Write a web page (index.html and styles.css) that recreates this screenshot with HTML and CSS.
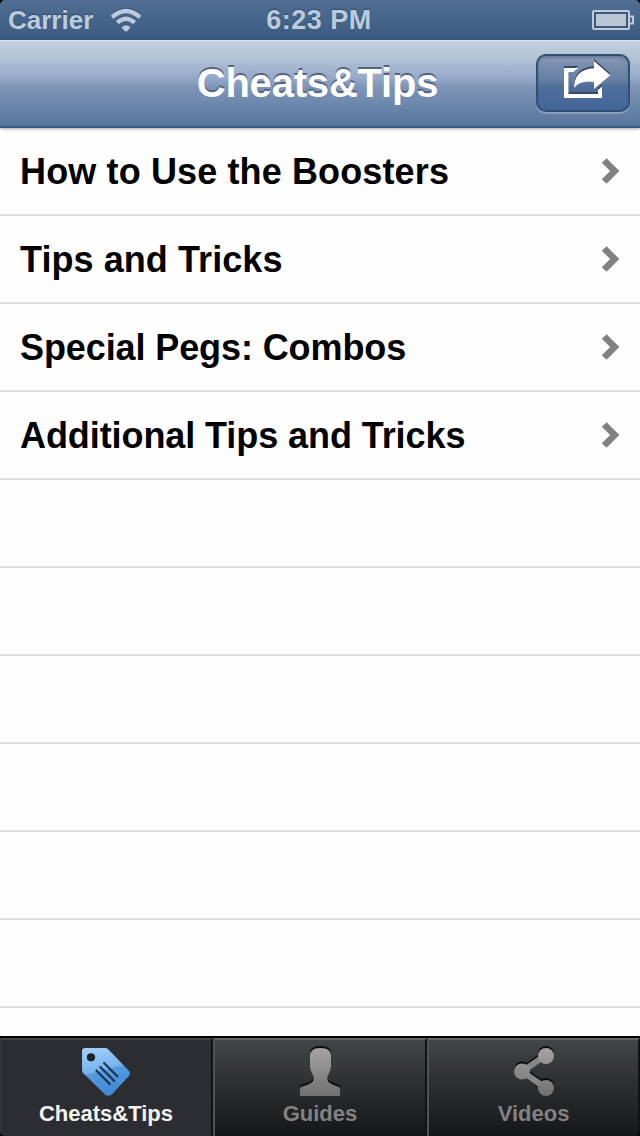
FILE: index.html
```html
<!DOCTYPE html>
<html lang="en">
<head>
<meta charset="utf-8">
<title>Cheats&amp;Tips</title>
<link rel="stylesheet" href="styles.css">
</head>
<body>
<div class="screen">
  <header class="status">
    <div class="status-left">
      <span class="carrier">Carrier</span>
      <svg class="wifi" width="32" height="24" viewBox="110 7 32 24">
        <g fill="none" stroke="#bdcbdc" stroke-width="4.2">
          <path d="M112 16.2Q126 3.8 140 16.2"/>
          <path d="M117.3 21.6Q126 13.800 134.700 21.600"/>
        </g>
        <path d="M121.500 26.300Q126 22 130.500 26.300L127.500 29.800Q126 31.300 124.500 29.800Z" fill="#bdcbdc"/>
      </svg>
    </div>
    <span class="clock">6:23 PM</span>
    <svg class="battery" width="44" height="22" viewBox="591 8 44 22">
      <rect x="593" y="10" width="36" height="18" rx="1" fill="#3d5878" stroke="#bdcbdc" stroke-width="2"/>
      <rect x="596" y="13" width="30" height="12" fill="#bac6d6"/>
      <path d="M630 15.500h3v7h-3" fill="none" stroke="#bdcbdc" stroke-width="2"/>
    </svg>
  </header>
  <nav class="navbar">
    <h1 class="title">Cheats&amp;Tips</h1>
    <button class="share" aria-label="Share">
      <svg width="54" height="46" viewBox="556 60 54 46">
        <g class="engraved" fill="#fff">
          <path d="M564 68H578.500Q575 70 573.500 72H568.500V94H598V90L602 86.500V98H564Z"/>
          <path d="M594 61L610.300 75.300L594 89V82Q580 80 574.200 88Q574 69.500 594 68.300Z"/>
        </g>
      </svg>
    </button>
  </nav>
  <main class="list">
    <div class="row"><span class="label l1">How to Use the Boosters</span><svg class="chevron" width="20" height="28" viewBox="0 0 20 28"><path d="M3.200 3.500L13.700 14L3.200 24.500"/></svg></div>
    <div class="row"><span class="label l2">Tips and Tricks</span><svg class="chevron" width="20" height="28" viewBox="0 0 20 28"><path d="M3.200 3.500L13.700 14L3.200 24.500"/></svg></div>
    <div class="row"><span class="label l3">Special Pegs: Combos</span><svg class="chevron" width="20" height="28" viewBox="0 0 20 28"><path d="M3.200 3.500L13.700 14L3.200 24.500"/></svg></div>
    <div class="row"><span class="label l4">Additional Tips and Tricks</span><svg class="chevron" width="20" height="28" viewBox="0 0 20 28"><path d="M3.200 3.500L13.700 14L3.200 24.500"/></svg></div>
    <div class="row"></div>
    <div class="row"></div>
    <div class="row"></div>
    <div class="row"></div>
    <div class="row"></div>
    <div class="row"></div>
  </main>
  <footer class="tabs">
    <div class="tab active">
      <svg width="52" height="52" viewBox="80 1046 52 52">
        <defs><linearGradient id="blue" x1="0" y1="0" x2="0.250" y2="1"><stop offset="0" stop-color="#a5d2fa"/><stop offset=".52" stop-color="#78b2ec"/><stop offset=".56" stop-color="#559be0"/><stop offset="1" stop-color="#4389d6"/></linearGradient></defs>
        <path fill="url(#blue)" d="M85 1048H105Q107.500 1048 109 1050L128.500 1070.500Q131 1073 129 1076L112 1094.200Q109 1097 105.500 1095L83.500 1073.500Q82 1072 82 1070V1051Q82 1048 85 1048Z"/>
        <circle cx="91" cy="1057.300" r="4.100" fill="#202326"/>
        <path d="M103.500 1062.500L118 1077M99.800 1066.500L114.800 1081.500M95.800 1070L110.500 1084.700" stroke="#17304b" stroke-width="2"/>
      </svg>
      <span class="tab-name">Cheats&amp;Tips</span>
    </div>
    <div class="tab">
      <svg width="52" height="52" viewBox="294 1046 52 52">
        <defs><linearGradient id="gray" gradientUnits="userSpaceOnUse" x1="0" y1="1048" x2="0" y2="1096"><stop offset="0" stop-color="#a4a4a4"/><stop offset="1" stop-color="#707070"/></linearGradient></defs>
        <path class="cutout" fill="url(#gray)" d="M310 1057Q309.500 1048 320.500 1048T331 1057V1063.500Q332 1066 330.300 1070Q329.500 1073 327.500 1076V1080C328.500 1085 340 1086 340 1088.500V1096H300V1088.500C300 1086 312.500 1085 313.500 1080V1076Q311.500 1073 310.700 1070Q309 1066 310 1063.500Z"/>
      </svg>
      <span class="tab-name">Guides</span>
    </div>
    <div class="tab">
      <svg width="52" height="52" viewBox="508 1046 52 52">
        <g class="cutout" fill="url(#gray)">
          <path d="M546 1055L522 1071.500L546 1088" fill="none" stroke="#868686" stroke-width="6"/>
          <circle cx="546" cy="1056" r="8"/><circle cx="522" cy="1071.500" r="8"/><circle cx="546" cy="1088" r="8"/>
        </g>
      </svg>
      <span class="tab-name">Videos</span>
    </div>
  </footer>
</div>
</body>
</html>
```
FILE: styles.css
```css
* { box-sizing: border-box; }

body {
  margin: 0;
  background: #000;
  font-family: "Liberation Sans", Arial, sans-serif;
  font-weight: bold;
}

.screen {
  width: 640px;
  height: 1136px;
  display: grid;
  grid-template-rows: 40px 88px 908px 100px;
  overflow: hidden;
  border-radius: 5px;
}

.status {
  display: grid;
  grid-template-columns: 1fr auto 1fr;
  align-items: center;
  padding: 0 5px 0 8px;
  background: linear-gradient(#506e92, #3c5b82);
  color: #bdcbdc;
  font-size: 26px;
  line-height: 40px;
  text-shadow: 0 -1px 1px #304a6c;
}

.status-left { display: flex; align-items: center; gap: 17px; }
.wifi { margin-bottom: 1px; filter: drop-shadow(0 -1px 0 #39547a); }
.clock { font-size: 27px; letter-spacing: 0.5px; margin-right: 5px; }
.battery { justify-self: end; margin-bottom: 1px; }

.navbar {
  display: grid;
  grid-template-columns: 104px 1fr 104px;
  align-items: center;
  z-index: 1;
  background: linear-gradient(#c2d0dd 0, #b3c3d6 20%, #92a6c6 45%, #7d94b7 55%, #5b789f 96%, #52759c 100%);
  border-top: 1px solid #d8e2ec;
  border-bottom: 2px solid #385a7e;
  box-shadow: 0 1px 3px rgba(0, 0, 0, .35);
}

.title {
  grid-column: 2;
  margin: 0 5px 1px 0;
  text-align: center;
  font-size: 40px;
  letter-spacing: -0.2px;
  line-height: 46px;
  color: #fff;
  text-shadow: 0 -2px 0 #536480;
}

.share {
  width: 94px;
  height: 58px;
  margin-bottom: 2px;
  padding: 0;
  display: grid;
  place-items: center;
  border: 2px solid #354f73;
  border-radius: 10px;
  background: linear-gradient(#8599b5 0, #627ca3 48%, #4f6e9a 56%, #42659a 100%);
  box-shadow: 0 2px 1px rgba(185, 205, 228, .45), inset 0 2px 2px rgba(45, 65, 95, .3);
}

.share svg { overflow: visible; }
.engraved { filter: drop-shadow(0 -2px 0 #3a4963); }

.list { background: #fefefe; overflow: hidden; }

.row {
  height: 88px;
  display: flex;
  align-items: center;
  justify-content: space-between;
  padding: 0 19px 0 20px;
  border-bottom: 2px solid #e0e0e0;
}

.label { padding-top: 2px; font-size: 36px; line-height: 42px; color: #000; white-space: nowrap; }
.l1 { letter-spacing: 0.13px; }
.l2 { letter-spacing: 0.07px; }
.l3 { letter-spacing: -0.1px; }
.l4 { letter-spacing: -0.08px; }
.chevron { fill: none; stroke: #818181; stroke-width: 6.6; }

.tabs {
  display: grid;
  grid-template-columns: 213px 214px 213px;
  border-top: 2px solid #000;
  background: linear-gradient(#444748, #2b2d2f 50%, #151618);
}

.tab {
  display: flex;
  flex-direction: column;
  align-items: center;
  padding-top: 6px;
  border-top: 2px solid #626465;
  border-left: 2px solid #505253;
  border-right: 2px solid #111213;
  color: #828282;
}

.tab.active {
  padding-right: 1px;
  color: #f4f4f6;
  background: #2b2d30;
  border-top-color: #424446;
  border-left-color: #303235;
}

.tab svg { flex: none; }
.cutout { filter: drop-shadow(0 -2px 0 #0b0c0d); }
.tab-name { font-size: 22px; line-height: 26px; margin-top: 3px; }
```
